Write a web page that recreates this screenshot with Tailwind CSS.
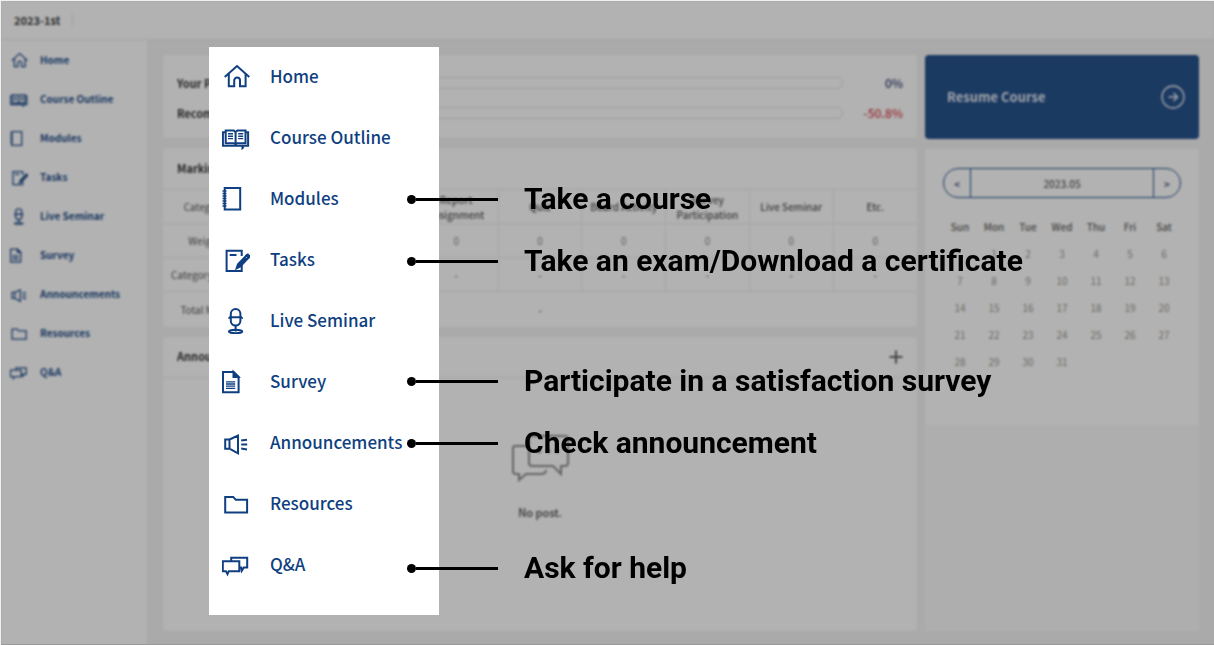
<!DOCTYPE html>
<html lang="en">
<head>
<meta charset="utf-8">
<meta name="viewport" content="width=device-width, initial-scale=1">
<title>Course home menu guide</title>
<script src="https://cdn.jsdelivr.net/npm/@tailwindcss/browser@4"></script>
</head>
<body class="bg-white font-['Noto_Sans_CJK_KR','Noto_Sans',sans-serif]">

<!-- Menu icons shared by the sidebar and the enlarged menu -->
<svg class="hidden" aria-hidden="true">
  <defs>
    <symbol id="i-home" viewBox="0 0 28 28"><path d="M2.700 15 15 4l12.300 11M6.800 12v12.200h5.400v-5.700a2.900 2.900 0 0 1 5.800 0v5.700h5.600V12"/></symbol>
    <symbol id="i-outline" viewBox="0 0 28 28"><path d="M3.500 9.200H.9v13.600h25.200V9.200h-2.600"/><path d="M13.600 9.200 11.800 7.600H3.700v12.600h8.200l1.700 1.200 1.700-1.200h8.200V7.600h-8.100zM13.600 9v12"/><path d="M6 10.800h5M6 13.200h5M6 15.600h5M16.200 10.800h5M16.200 13.200h5M16.200 15.600h5" stroke-width="1.400"/><path d="M20.500 22v3l1.200-1"/></symbol>
    <symbol id="i-modules" viewBox="0 0 28 28"><path d="M2.700 4h15.500v21.400H2.700z"/><path d="M.5 7h4M.5 9.500h4M.5 12h4M.5 14.500h4M.5 17h4M.5 19.500h4M.5 22h4" stroke-width="1.300"/></symbol>
    <symbol id="i-tasks" viewBox="0 0 28 28"><path d="M19.700 11V5.700H4.600v20.200h15.100v-6M7.700 10h6.800"/><path d="M14.600 23.300l1.400-4 8.500-8.800 2.200 2-8.400 8.900zM16.500 21.500l8-8.500"/><path d="M24.500 10.500l1.300-1 2 1.900-1.200 1.200z" fill="currentColor"/></symbol>
    <symbol id="i-live" viewBox="0 0 28 28"><rect x="8.800" y="3" width="9.600" height="16.600" rx="4.800"/><path d="M7.200 11.300h12.800M7.200 11.300v1.500M20 11.300v1.500M13.600 19.600v6"/><ellipse cx="13.600" cy="25.500" rx="6.600" ry="1.700"/></symbol>
    <symbol id="i-survey" viewBox="0 0 28 28"><path d="M11.500 5H1v20.200h15.600V10z"/><path d="M11.500 5v5h5z" fill="currentColor"/><path d="M4 14.800h9.200M4 17h9.200M4 19.200h9.200M4 21.400h9.200" stroke-width="1.300"/></symbol>
    <symbol id="i-ann" viewBox="0 0 28 28"><path d="M7.500 11.500H3.200v9.200h4.300zM7.500 11.500 16 7.600v17.800l-8.500-4.700M19.200 12.600l5.800-.9M19.200 16.500h6M19.200 20.500l5.800.9"/></symbol>
    <symbol id="i-res" viewBox="0 0 28 28"><path d="M3.200 23.500V7.900h8l2.600 2.900h11.300v12.700z"/></symbol>
    <symbol id="i-qa" viewBox="0 0 28 28"><path d="M.8 11.200h16.500v10H6.800l-1.300 2.900-1.500-2.900H.8zM9.200 11V7.700h16V17.500h-3.400l-2 3.200-.6-3.200h-1.500"/></symbol>
  </defs>
</svg>

<div class="relative min-h-screen overflow-hidden border-t border-l border-[#f0f0f0] bg-[#f4f4f4]">

  <!-- Course page behind the guide -->
  <div class="flex min-h-[calc(100vh-1px)] flex-col blur-[1px]">
    <header class="flex h-[39px] items-center border-b border-[#ececec] bg-white px-[13px]">
      <span class="border-r border-[#e4e4e4] pr-3 text-[11px] leading-3 font-bold text-[#444]">2023-1st</span>
    </header>
    <div class="flex flex-1">
      <nav aria-label="Course" class="w-[146px] shrink-0 bg-white text-[10px] font-bold text-[#28538d]">
        <ul>
          <li><a href="#" class="flex h-[39px] items-center gap-3 pl-[9px]"><svg class="size-[18px] shrink-0 fill-none stroke-current stroke-2"><use href="#i-home"/></svg>Home</a></li>
          <li><a href="#" class="flex h-[39px] items-center gap-3 pl-[9px]"><svg class="size-[18px] shrink-0 fill-none stroke-current stroke-2"><use href="#i-outline"/></svg>Course Outline</a></li>
          <li><a href="#" class="flex h-[39px] items-center gap-3 pl-[9px]"><svg class="size-[18px] shrink-0 fill-none stroke-current stroke-2"><use href="#i-modules"/></svg>Modules</a></li>
          <li><a href="#" class="flex h-[39px] items-center gap-3 pl-[9px]"><svg class="size-[18px] shrink-0 fill-none stroke-current stroke-2"><use href="#i-tasks"/></svg>Tasks</a></li>
          <li><a href="#" class="flex h-[39px] items-center gap-3 pl-[9px]"><svg class="size-[18px] shrink-0 fill-none stroke-current stroke-2"><use href="#i-live"/></svg>Live Seminar</a></li>
          <li><a href="#" class="flex h-[39px] items-center gap-3 pl-[9px]"><svg class="size-[18px] shrink-0 fill-none stroke-current stroke-2"><use href="#i-survey"/></svg>Survey</a></li>
          <li><a href="#" class="flex h-[39px] items-center gap-3 pl-[9px]"><svg class="size-[18px] shrink-0 fill-none stroke-current stroke-2"><use href="#i-ann"/></svg>Announcements</a></li>
          <li><a href="#" class="flex h-[39px] items-center gap-3 pl-[9px]"><svg class="size-[18px] shrink-0 fill-none stroke-current stroke-2"><use href="#i-res"/></svg>Resources</a></li>
          <li><a href="#" class="flex h-[39px] items-center gap-3 pl-[9px]"><svg class="size-[18px] shrink-0 fill-none stroke-current stroke-2"><use href="#i-qa"/></svg>Q&amp;A</a></li>
        </ul>
      </nav>

      <main class="flex flex-1 gap-2 pt-[15px] pr-[15px] pb-[14px] pl-4">
        <div class="flex min-w-0 flex-1 flex-col gap-[10px]">
          <section class="flex h-[83px] flex-col justify-center rounded-sm bg-white px-[14px] pt-[3px] text-[11px] font-bold text-[#333]">
            <div class="flex h-[30px] items-center">
              <span class="w-[160px]">Your Progress</span>
              <div class="h-3 flex-1 rounded-full border border-[#e2e2e2]"></div>
              <span class="w-[60px] text-right text-[12px] font-medium text-[#2d3a6b]">0%</span>
            </div>
            <div class="flex h-[30px] items-center">
              <span class="w-[160px]">Recommended</span>
              <div class="h-3 flex-1 rounded-full border border-[#e2e2e2]"></div>
              <span class="w-[60px] text-right text-[12px] font-medium text-[#d8434f]">-50.8%</span>
            </div>
          </section>

          <section class="rounded-sm bg-white">
            <h2 class="flex h-[41px] items-center px-[14px] text-[11px] font-bold text-[#333]">Marking Criteria</h2>
            <table class="w-full table-fixed border-collapse text-center text-[10px] leading-[15px] text-[#555]">
              <thead>
                <tr class="h-[34px] border-y border-[#ededed]">
                  <th class="border-r border-[#ededed] p-0 font-normal">Category</th>
                  <th class="border-r border-[#ededed] p-0"></th>
                  <th class="border-r border-[#ededed] p-0"></th>
                  <th class="border-r border-[#ededed] p-0 font-medium">Report<br>Assignment</th>
                  <th class="border-r border-[#ededed] p-0 font-medium">Quiz</th>
                  <th class="border-r border-[#ededed] p-0 font-medium">Board Activity</th>
                  <th class="border-r border-[#ededed] p-0 font-medium">Survey<br>Participation</th>
                  <th class="border-r border-[#ededed] p-0 font-medium">Live Seminar</th>
                  <th class="p-0 font-medium">Etc.</th>
                </tr>
              </thead>
              <tbody>
                <tr class="h-[34px] border-b border-[#ededed] text-[#888]">
                  <th class="border-r border-[#ededed] p-0 font-normal text-[#555]">Weight</th>
                  <td class="border-r border-[#ededed]"></td><td class="border-r border-[#ededed]"></td>
                  <td class="border-r border-[#ededed]">0</td><td class="border-r border-[#ededed]">0</td><td class="border-r border-[#ededed]">0</td><td class="border-r border-[#ededed]">0</td><td class="border-r border-[#ededed]">0</td><td>0</td>
                </tr>
                <tr class="h-[34px] border-b border-[#ededed]">
                  <th class="border-r border-[#ededed] p-0 font-normal">Category Mark</th>
                  <td class="border-r border-[#ededed]"></td><td class="border-r border-[#ededed]"></td>
                  <td class="border-r border-[#ededed]">-</td><td class="border-r border-[#ededed]">-</td><td class="border-r border-[#ededed]">-</td><td class="border-r border-[#ededed]">-</td><td class="border-r border-[#ededed]">-</td><td>-</td>
                </tr>
                <tr class="h-[35px]">
                  <th class="border-r border-[#ededed] p-0 font-normal">Total Mark</th>
                  <td colspan="7">-</td><td></td>
                </tr>
              </tbody>
            </table>
          </section>

          <section class="flex flex-1 flex-col rounded-sm bg-white">
            <div class="flex h-[41px] items-center justify-between border-b border-[#ededed] px-[14px] text-[11px] font-bold text-[#333]">
              <h2>Announcements</h2>
              <button type="button" aria-label="More announcements" class="text-[#666]"><svg viewBox="0 0 14 14" class="size-[14px] fill-none stroke-current stroke-2"><path d="M7 .5v13M.5 7h13"/></svg></button>
            </div>
            <div class="flex flex-col items-center gap-[22px] pt-14">
              <svg viewBox="0 0 58 48" class="h-12 w-[58px] fill-none stroke-[#909090] stroke-2" aria-hidden="true">
                <path d="M16 12H4q-2 0-2 2v23q0 3 3 3h3l0 6 7-6h15q5 0 5-4"/>
                <path d="M20 2h34q3 0 3 3v24q0 3-3 3h-4v8l-8-8H21q-3 0-3-3V5q0-3 2-3z"/>
                <path d="M26 17h4M35 17h4M44 17h4" stroke-width="4"/>
              </svg>
              <p class="text-[11px] leading-4 font-medium text-[#444]">No post.</p>
            </div>
          </section>
        </div>

        <aside class="flex w-[274px] shrink-0 flex-col gap-[10px]">
          <button type="button" class="flex h-[84px] shrink-0 items-center justify-between rounded bg-[#28538d] px-[14px] pl-[22px] text-left text-[13px] font-bold text-[#e8edf4]">
            Resume Course
            <svg viewBox="0 0 24 24" class="size-6 fill-none stroke-current" aria-hidden="true"><circle cx="12" cy="12" r="11" stroke-width="1.300"/><path d="M7.500 12h9M12.500 8l4 4-4 4" stroke-width="1.500"/></svg>
          </button>
          <div class="flex flex-1 flex-col bg-[#fafafa]">
            <section class="h-[276px] bg-white px-[18px] pt-[19px]">
              <div class="flex h-[30px] rounded-full border border-[#28538d] text-[10px] text-[#666]">
                <button type="button" aria-label="Previous month" class="w-[26px] font-bold text-[#55618a]">&lt;</button>
                <span class="flex flex-1 items-center justify-center border-x border-[#28538d] font-medium">2023.05</span>
                <button type="button" aria-label="Next month" class="w-[26px] font-bold text-[#55618a]">&gt;</button>
              </div>
              <table class="mt-[15px] w-full table-fixed text-center text-[10px] text-[#a09a92]">
                <thead><tr class="h-[27px] text-[#666]"><th class="p-0 font-medium">Sun</th><th class="p-0 font-medium">Mon</th><th class="p-0 font-medium">Tue</th><th class="p-0 font-medium">Wed</th><th class="p-0 font-medium">Thu</th><th class="p-0 font-medium">Fri</th><th class="p-0 font-medium">Sat</th></tr></thead>
                <tbody>
                  <tr class="h-[27px]"><td></td><td>1</td><td>2</td><td>3</td><td>4</td><td>5</td><td>6</td></tr>
                  <tr class="h-[27px]"><td>7</td><td>8</td><td>9</td><td>10</td><td>11</td><td>12</td><td>13</td></tr>
                  <tr class="h-[27px]"><td>14</td><td>15</td><td>16</td><td>17</td><td>18</td><td>19</td><td>20</td></tr>
                  <tr class="h-[27px]"><td>21</td><td>22</td><td>23</td><td>24</td><td>25</td><td>26</td><td>27</td></tr>
                  <tr class="h-[27px]"><td>28</td><td>29</td><td>30</td><td>31</td><td></td><td></td><td></td></tr>
                </tbody>
              </table>
            </section>
          </div>
        </aside>
      </main>
    </div>
  </div>

  <!-- Dimmed guide layer: enlarged menu and its callouts -->
  <div class="absolute inset-0 border-b border-[#999] bg-black/30">
    <nav aria-label="Menu guide" class="absolute top-[46px] left-[208px] w-[230px] bg-white pb-[22px] text-[17px] font-medium text-[#0f3f80]">
      <ul class="flex flex-col gap-[3px]">
        <li><a href="#" class="flex h-[58px] items-center gap-5 pl-[13px]"><svg class="size-7 shrink-0 fill-none stroke-current stroke-2"><use href="#i-home"/></svg>Home</a></li>
        <li><a href="#" class="flex h-[58px] items-center gap-5 pl-[13px]"><svg class="size-7 shrink-0 fill-none stroke-current stroke-2"><use href="#i-outline"/></svg>Course Outline</a></li>
        <li><a href="#" class="flex h-[58px] items-center gap-5 pl-[13px]"><svg class="size-7 shrink-0 fill-none stroke-current stroke-2"><use href="#i-modules"/></svg>Modules</a></li>
        <li><a href="#" class="flex h-[58px] items-center gap-5 pl-[13px]"><svg class="size-7 shrink-0 fill-none stroke-current stroke-2"><use href="#i-tasks"/></svg>Tasks</a></li>
        <li><a href="#" class="flex h-[58px] items-center gap-5 pl-[13px]"><svg class="size-7 shrink-0 fill-none stroke-current stroke-2"><use href="#i-live"/></svg>Live Seminar</a></li>
        <li><a href="#" class="flex h-[58px] items-center gap-5 pl-[13px]"><svg class="size-7 shrink-0 fill-none stroke-current stroke-2"><use href="#i-survey"/></svg>Survey</a></li>
        <li><a href="#" class="flex h-[58px] items-center gap-5 pl-[13px]"><svg class="size-7 shrink-0 fill-none stroke-current stroke-2"><use href="#i-ann"/></svg>Announcements</a></li>
        <li><a href="#" class="flex h-[58px] items-center gap-5 pl-[13px]"><svg class="size-7 shrink-0 fill-none stroke-current stroke-2"><use href="#i-res"/></svg>Resources</a></li>
        <li><a href="#" class="flex h-[58px] items-center gap-5 pl-[13px]"><svg class="size-7 shrink-0 fill-none stroke-current stroke-2"><use href="#i-qa"/></svg>Q&amp;A</a></li>
      </ul>
    </nav>

    <ul class="absolute top-[183px] left-[406px] font-[Roboto,sans-serif] text-[30px] leading-[30px] font-bold whitespace-nowrap text-black">
      <li class="flex items-center"><i class="size-[9px] rounded-full bg-black"></i><i class="mr-[26px] h-[3px] w-[82px] bg-black"></i>Take a course</li>
      <li class="mt-8 flex items-center"><i class="size-[9px] rounded-full bg-black"></i><i class="mr-[26px] h-[3px] w-[82px] bg-black"></i>Take an exam/Download a certificate</li>
      <li class="mt-[90px] flex items-center"><i class="size-[9px] rounded-full bg-black"></i><i class="mr-[26px] h-[3px] w-[82px] bg-black"></i>Participate in a satisfaction survey</li>
      <li class="mt-8 flex items-center"><i class="size-[9px] rounded-full bg-black"></i><i class="mr-[26px] h-[3px] w-[82px] bg-black"></i>Check announcement</li>
      <li class="mt-[95px] flex items-center"><i class="size-[9px] rounded-full bg-black"></i><i class="mr-[26px] h-[3px] w-[82px] bg-black"></i>Ask for help</li>
    </ul>
  </div>
</div>
</body>
</html>
